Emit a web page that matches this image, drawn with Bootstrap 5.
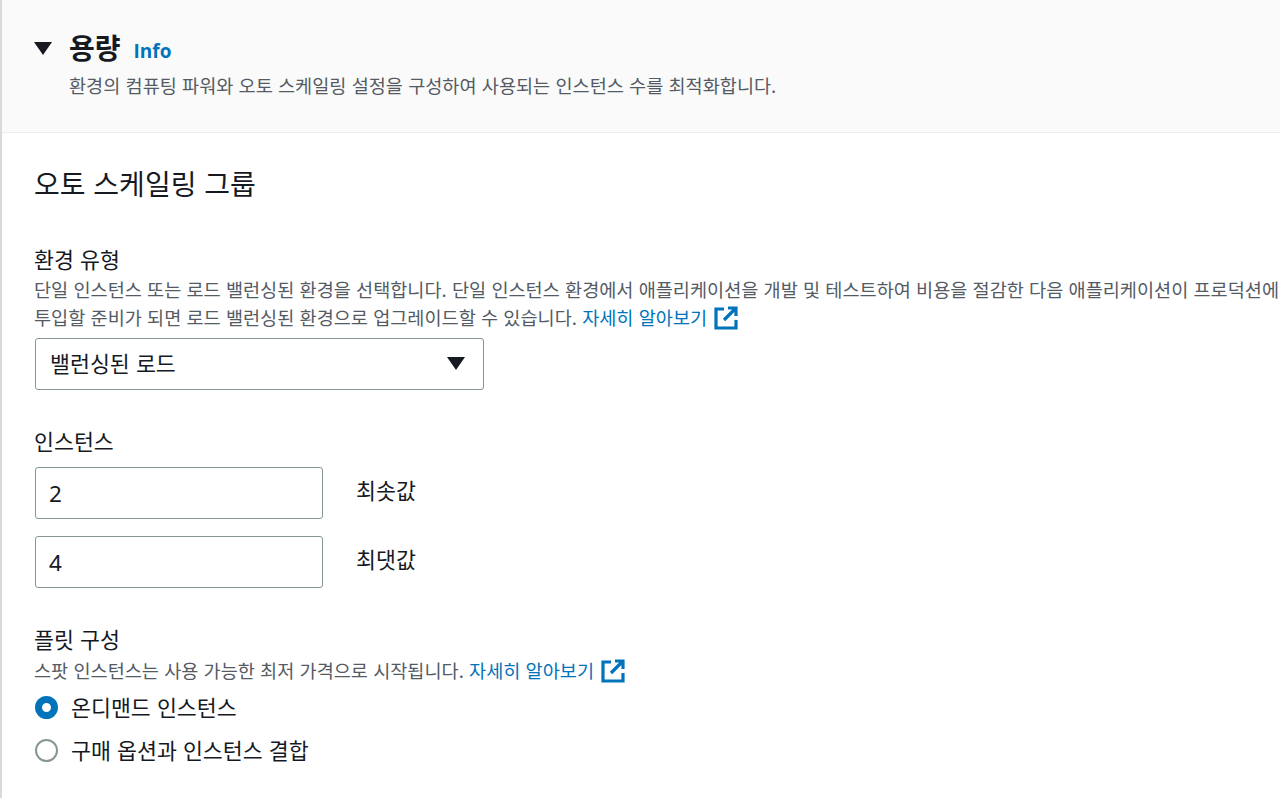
<!DOCTYPE html>
<html lang="ko">
<head>
  <meta charset="UTF-8">
  <title>용량</title>
  <link href="https://cdn.jsdelivr.net/npm/bootstrap@5.3.3/dist/css/bootstrap.min.css" rel="stylesheet">
  <style>
    html, body { height: 798px; overflow: hidden; }
    body { font-family: "Noto Sans CJK KR", "Noto Sans", sans-serif; color: #16191f; background: #fff; }
    .page-wrap { height: 798px; border-left: 2px solid #d5dbdb; overflow: hidden; }
    .cap-head { height: 133px; background: #fafafa; border-bottom: 1px solid #eaeded; padding: 28px 0 0 32px; }
    .caret-down { width: 0; height: 0; border-left: 9px solid transparent; border-right: 9px solid transparent; border-top: 13px solid #16191f; flex: none; }
    .head-row { column-gap: 17px; }
    .cap-title { font-size: 28px; font-weight: 700; line-height: 38px; margin: 0 0 2px; }
    .info-link { font-family: "Open Sans", sans-serif; font-size: 19px; font-weight: 700; color: #0073bb; text-decoration: none; margin-left: -4px; padding-top: 6px; }
    .cap-desc { font-size: 18.6px; line-height: 26px; color: #545b64; padding-left: 35px; margin: 4px 0 0; }
    .cap-body { padding: 0 0 0 33px; }
    .group-title { font-size: 28px; font-weight: 400; line-height: 36px; margin: 32px 0 44px -1px; }
    .fld-label { font-size: 21.7px; line-height: 28px; margin-left: -1px; }
    .fld-help { font-size: 18.6px; line-height: 28px; color: #545b64; white-space: nowrap; margin: 2px 0 0 -1px; }
    .fld-help a { color: #0073bb; text-decoration: none; }
    .ext-icon { width: 24px; height: 24px; vertical-align: -5px; margin-left: 7px; }
    .fake-select { width: 449px; height: 52px; border: 1px solid #879596; border-radius: 3px; padding: 0 18px 2px 14px; font-size: 21.7px; margin-top: 7px; }
    .num-box { width: 288px; height: 52px; border: 1px solid #879596; border-radius: 3px; padding: 0 13px; font-size: 22.5px; line-height: 51px; font-family: "Noto Sans", sans-serif; }
    .num-row { column-gap: 33px; }
    .num-row + .num-row { margin-top: 17px; }
    .num-label { padding-top: 9px; }
    .inst-label { margin-top: 37px; margin-bottom: 12px; }
    .fleet-label { margin-top: 37px; }
    .fleet-help { margin-top: 3px; }
    .opt-radio { width: 23px; height: 23px; border-radius: 50%; border: 2px solid #879596; background: #fff; flex: none; }
    .opt-radio.is-on { border: 7px solid #0073bb; }
    .opt-row { column-gap: 13px; margin-top: 9px; }
    .opt-row + .opt-row { margin-top: 15px; }
    .opt-text { font-size: 21.7px; line-height: 28px; }
  </style>
</head>
<body>
<div class="page-wrap">
  <div class="cap-head">
    <div class="d-flex align-items-center head-row">
      <span class="caret-down"></span>
      <h2 class="cap-title">용량</h2>
      <a class="info-link" href="#">Info</a>
    </div>
    <p class="cap-desc">환경의 컴퓨팅 파워와 오토 스케일링 설정을 구성하여 사용되는 인스턴스 수를 최적화합니다.</p>
  </div>

  <div class="cap-body">
    <h3 class="group-title">오토 스케일링 그룹</h3>

    <div class="fld-label">환경 유형</div>
    <div class="fld-help">단일 인스턴스 또는 로드 밸런싱된 환경을 선택합니다. 단일 인스턴스 환경에서 애플리케이션을 개발 및 테스트하여 비용을 절감한 다음 애플리케이션이 프로덕션에<br>투입할 준비가 되면 로드 밸런싱된 환경으로 업그레이드할 수 있습니다. <a href="#">자세히 알아보기<svg class="ext-icon" viewBox="0 0 24 24" fill="none" stroke="#0073bb" stroke-width="3.2"><path d="M10 3H2v19h20v-8"/><path d="M14 2h8v8M22 2L10 14"/></svg></a></div>
    <div class="fake-select d-flex align-items-center justify-content-between">
      <span>밸런싱된 로드</span>
      <span class="caret-down"></span>
    </div>

    <div class="fld-label inst-label">인스턴스</div>
    <div class="d-flex num-row">
      <div class="num-box">2</div>
      <div class="opt-text num-label">최솟값</div>
    </div>
    <div class="d-flex num-row">
      <div class="num-box">4</div>
      <div class="opt-text num-label">최댓값</div>
    </div>

    <div class="fld-label fleet-label">플릿 구성</div>
    <div class="fld-help fleet-help">스팟 인스턴스는 사용 가능한 최저 가격으로 시작됩니다. <a href="#">자세히 알아보기<svg class="ext-icon" viewBox="0 0 24 24" fill="none" stroke="#0073bb" stroke-width="3.2"><path d="M10 3H2v19h20v-8"/><path d="M14 2h8v8M22 2L10 14"/></svg></a></div>
    <div class="d-flex align-items-center opt-row">
      <span class="opt-radio is-on"></span>
      <span class="opt-text">온디맨드 인스턴스</span>
    </div>
    <div class="d-flex align-items-center opt-row">
      <span class="opt-radio"></span>
      <span class="opt-text">구매 옵션과 인스턴스 결합</span>
    </div>
  </div>
</div>
<script src="https://cdn.jsdelivr.net/npm/bootstrap@5.3.3/dist/js/bootstrap.bundle.min.js"></script>
</body>
</html>
